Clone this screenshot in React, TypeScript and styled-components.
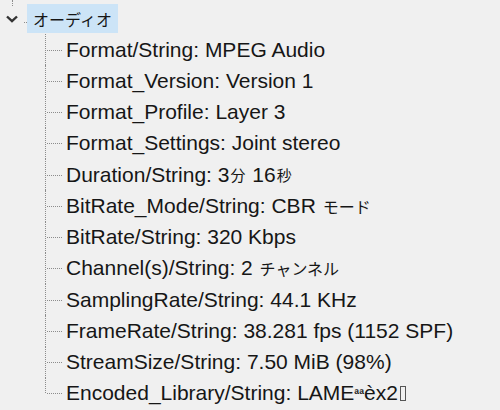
import React from 'react';
import styled, { createGlobalStyle } from 'styled-components';

type Field = {
  label: string;
  value: React.ReactNode;
};

// built lazily: the styled parts below are not defined yet at module load
const buildFields = (): Field[] => [
  { label: 'Format/String', value: 'MPEG Audio' },
  { label: 'Format_Version', value: 'Version 1' },
  { label: 'Format_Profile', value: 'Layer 3' },
  { label: 'Format_Settings', value: 'Joint stereo' },
  {
    label: 'Duration/String',
    value: (
      <>
        3<Jp $kanji>分</Jp> 16<Jp $kanji>秒</Jp>
      </>
    ),
  },
  {
    label: 'BitRate_Mode/String',
    value: (
      <>
        CBR <Jp>モード</Jp>
      </>
    ),
  },
  { label: 'BitRate/String', value: '320 Kbps' },
  {
    label: 'Channel(s)/String',
    value: (
      <>
        2 <Jp>チャンネル</Jp>
      </>
    ),
  },
  { label: 'SamplingRate/String', value: '44.1 KHz' },
  { label: 'FrameRate/String', value: '38.281 fps (1152 SPF)' },
  { label: 'StreamSize/String', value: '7.50 MiB (98%)' },
  {
    label: 'Encoded_Library/String',
    value: (
      <>
        LAME<Sup>ªª</Sup>èx2
        <MissingGlyph />
      </>
    ),
  },
];

const Chevron = () => (
  <svg width="12" height="8" viewBox="0 0 12 8">
    <polyline
      points="1,1.5 6,6.2 11,1.5"
      fill="none"
      stroke="#333"
      strokeWidth="2.4"
    />
  </svg>
);

const App: React.FC = () => {
  const fields = buildFields();
  return (
    <>
      <GlobalStyle />
      <StyledTree>
        <RootRow>
          <Expander>
            <Chevron />
          </Expander>
          <Twig />
          <Label selected>
            <Jp>オーディオ</Jp>
          </Label>
        </RootRow>
        <Children>
          {fields.map((f, i) => (
            <ChildRow key={f.label}>
              <Branch $last={i === fields.length - 1} />
              <Label>
                {f.label}: {f.value}
              </Label>
            </ChildRow>
          ))}
        </Children>
      </StyledTree>
    </>
  );
};

const GlobalStyle = createGlobalStyle`
  html, body {
    margin: 0;
    background: #f0f0f0;
  }
  body {
    font-family: "Liberation Sans", Arial, "Noto Sans CJK JP", sans-serif;
    font-size: 21px;
    color: #161616;
  }
`;

const StyledTree = styled.div`
  padding-top: 3px;
  width: 500px;
  height: 407px;
  overflow: hidden;
`;

const RootRow = styled.div`
  display: flex;
  align-items: center;
  height: 31px;
`;

const Expander = styled.div`
  position: relative;
  width: 24px;
  height: 100%;
  display: flex;
  align-items: center;
  justify-content: center;
  padding-top: 1px;
  box-sizing: border-box;

  &::before {
    content: '';
    position: absolute;
    left: 12px;
    top: -3px;
    height: 6px;
    border-left: 1px dotted #8c8c8c;
  }
`;

const Twig = styled.div`
  width: 3px;
  border-top: 1px dotted #8c8c8c;
  margin-top: 8px;
`;

const Label = styled.div<{ selected?: boolean }>`
  display: flex;
  align-items: center;
  height: ${(p) => (p.selected ? '29px' : '100%')};
  padding: 0 ${(p) => (p.selected ? '5px' : '4px')};
  white-space: pre;
  background: ${(p) => (p.selected ? '#cce4f7' : 'transparent')};
`;

const Children = styled.div`
  margin-left: 44px;
`;

const ChildRow = styled.div`
  display: flex;
  height: 31.25px;
`;

const Branch = styled.div<{ $last: boolean }>`
  position: relative;
  width: 18px;
  flex-shrink: 0;

  &::before {
    content: '';
    position: absolute;
    left: 1px;
    top: 0;
    height: ${(p) => (p.$last ? '50%' : '100%')};
    border-left: 1px dotted #8c8c8c;
  }

  &::after {
    content: '';
    position: absolute;
    left: 3px;
    top: 50%;
    width: 15px;
    border-top: 1px dotted #8c8c8c;
  }
`;

const Jp = styled.span<{ $kanji?: boolean }>`
  font-family: "Noto Sans CJK JP", sans-serif;
  font-size: ${(p) => (p.$kanji ? '15px' : '16px')};
  margin: 0 1px;
`;

const Sup = styled.span`
  font-size: 13px;
  font-weight: bold;
  vertical-align: 6px;
`;

const MissingGlyph = styled.span`
  display: inline-block;
  width: 4px;
  height: 13px;
  margin-left: 2px;
  border: 1px solid #555;
  vertical-align: -2px;
`;

export default App;
